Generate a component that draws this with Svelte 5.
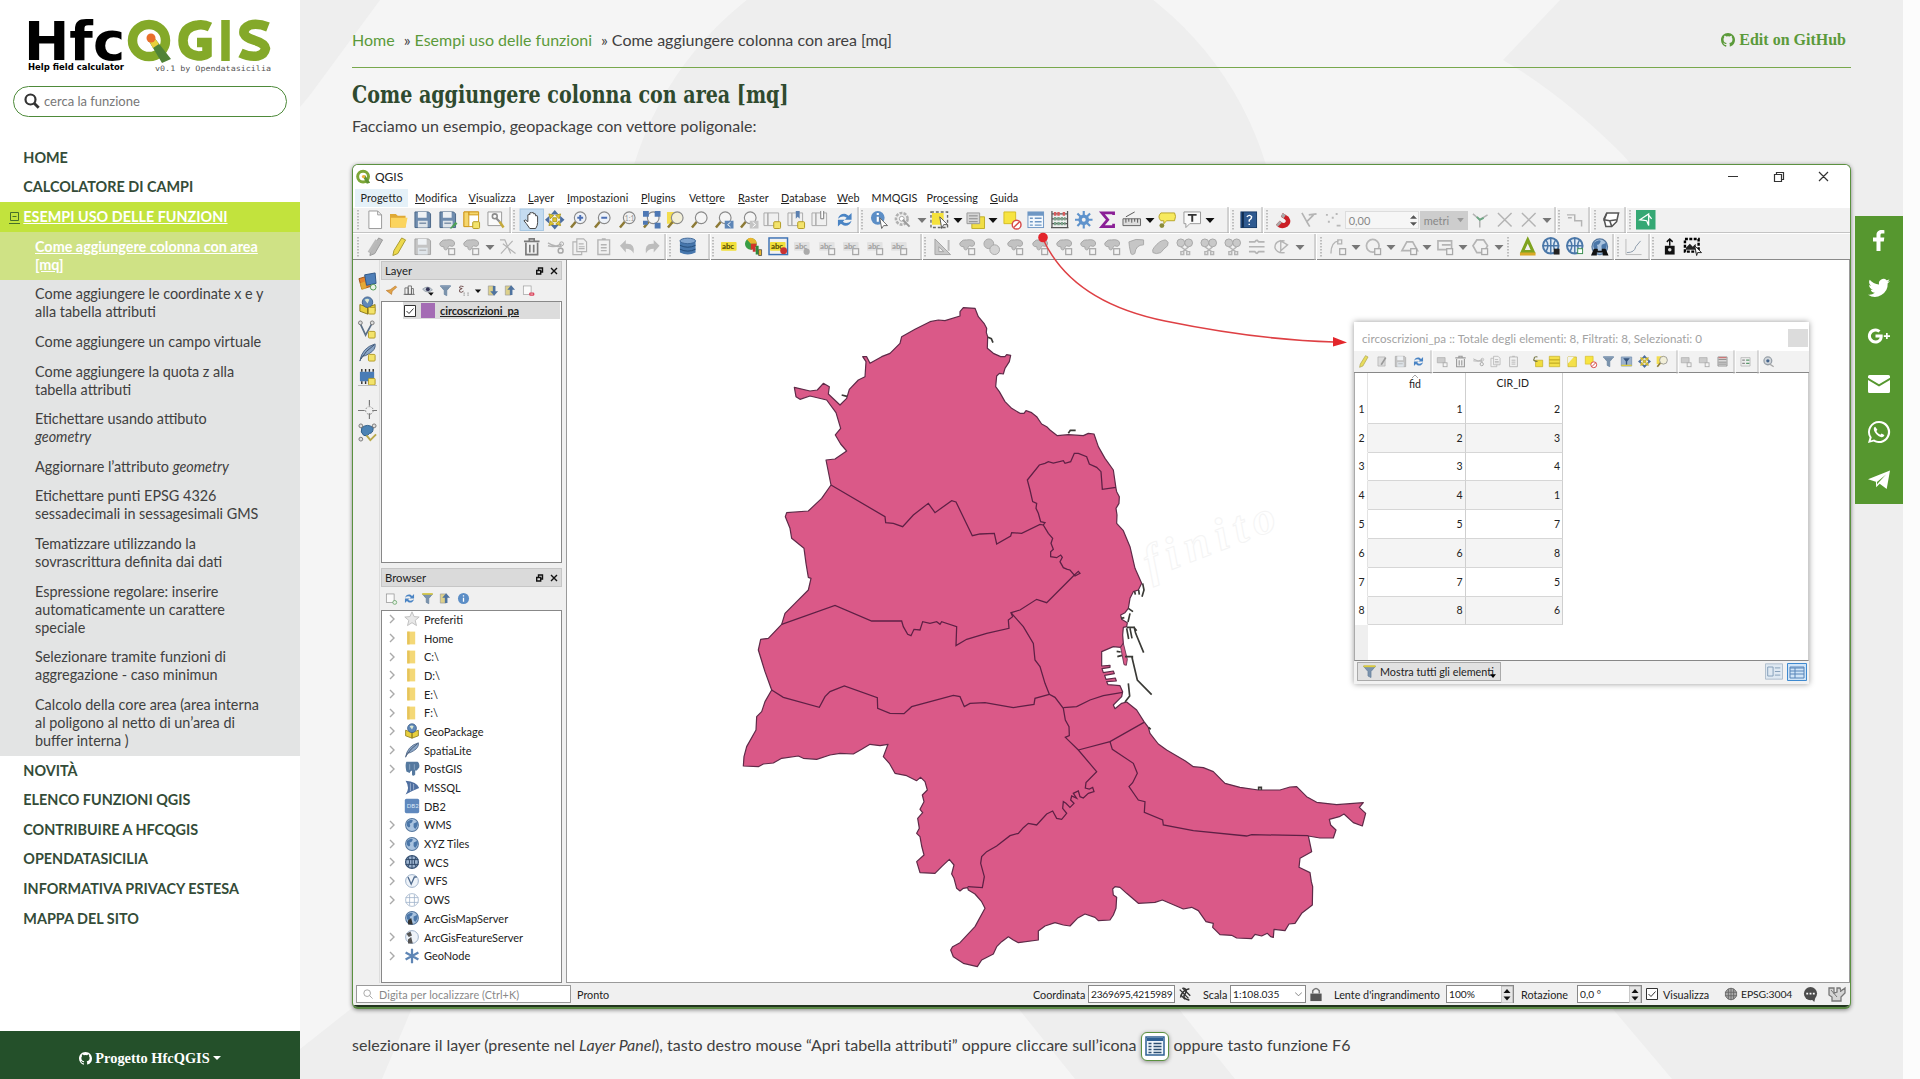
<script>
  const G = '#b4b4b4';
  const B = '#5f86b5';
  const grey = (d, s = 1.4) => `<path d="${d}" fill="none" stroke="${G}" stroke-width="${s}"/>`;
  const plus = '<rect x="11" y="12" width="7" height="7" rx="1" fill="#f3e36b" stroke="#b39b25"/>';
  const gplus = '<rect x="11" y="12" width="6" height="6" fill="#f4f4f4" stroke="#a8a8a8" stroke-width="1.3"/>';
  const blob = '<path d="M2 6q3-4 7-3 7-1 8 3 0 5-5 3-2 1-3 4-3 1-3-3-5 0-4-4z" fill="#c2c2c2" stroke="#a6a6a6"/>';
  const lens = (c, x = '') => `<path d="M7 12 2 18" stroke="#8d7a35" stroke-width="2.6"/><circle cx="11.5" cy="8" r="6" fill="${c}" stroke="#8a8a8a" stroke-width="1.2"/>${x}`;
  const globe = (x = '') => `<circle cx="10" cy="10" r="8" fill="#a9c3df" stroke="#56789f" stroke-width="1.3"/><path d="M4 6q5-4 7-2-1 4-4 4 2 4-1 5-4-2-2-7zM12 8l5-2q1 5-3 9-3-3-2-7z" fill="#4a76a8"/>${x}`;
  const abc = (c, b, x = '') => `<rect x="1" y="5" width="16" height="9" rx="1" fill="${c}"/><text x="2" y="12.5" font-size="8" font-weight="700" fill="${b}">abc</text>${x}`;
  const table = '<rect x="2" y="2" width="16" height="16" fill="#f3f8fd" stroke="#6e97c4"/><path d="M2 4h16" stroke="#6e97c4" stroke-width="4"/><path d="M4 8.500h3M4 12h3M4 15.500h3M9 8.500h7M9 12h7M9 15.500h7" stroke="#6e97c4" stroke-width="1.500"/>';
  const floppy = (c, s) => `<path d="M2 2h14l2 2v14H2z" fill="${c}" stroke="${s}"/><path d="M5 2h9v6H5z" fill="#eef1f4"/><path d="M5 11h10v7H5z" fill="#dfe5ea"/><path d="M6.500 13.500h7" stroke="${s}"/>`;
  const cyl = '<path d="M2 4v12q8 4 16 0V4z" fill="#4777ad"/><ellipse cx="10" cy="4" rx="8" ry="2.800" fill="#7fa4cf" stroke="#3c6697"/><path d="M2 8.500q8 4 16 0M2 12.500q8 4 16 0" fill="none" stroke="#234b78"/>';
  const sparkle = (c) => `<path d="M10 1v18M1 10h18M3.500 3.500l13 13M16.500 3.500l-13 13" stroke="${c}" stroke-width="2.200"/>`;
  const funnel = (t = '#8aa0b8') => `<path d="M2 3h16l-6 7v8l-4-2v-6z" fill="#7b93ad" stroke="#65809c"/><path d="M2 3h16" stroke="${t}" stroke-width="2.500"/>`;
  const refresh = (c = '#4a84c4') => `<path d="M3 9q2-6 8-5l3 2 3-3v7h-7l2-2q-4-3-9 1zM17 11q-2 6-8 5l-3-2-3 3v-7h7l-2 2q4 3 9-1z" fill="${c}"/>`;
  const feather = '<path d="M2 19Q4 5 18 1q1 6-6 10-4 3-8 3z" fill="#8ba6c6" stroke="#4b6384"/><path d="M3 17Q8 8 17 2" stroke="#3b4f6b" fill="none"/>';
  const box = '<path d="M2 9l8 3v7l-8-3zM18 9l-8 3v7l8-3z" fill="#e8cf3d" stroke="#8c7a1c"/><circle cx="10" cy="6.500" r="5.500" fill="#5f88b8" stroke="#3f608a"/><path d="M7 4q3-2 5 0l-2 4z" fill="#dce8d0"/>';
  const trash = (c) => `<path d="M2 4.500h16M7.500 4V2h5v2M4 6v12h12V6M8 8v8M12 8v8" fill="none" stroke="${c}" stroke-width="1.700"/>`;
  const pages = grey('M7 2h7l3 3v10H7zM7 5H3v13h9v-3M9 7h5M9 10h6M9 12h6', 1.2);
  const scis = grey('M2 6q7 4 14 4M2 9q8 2 14-2', 1.5) + '<circle cx="16" cy="7" r="2" fill="none" stroke="#a8a8a8"/><circle cx="15" cy="14" r="2.500" fill="none" stroke="#a8a8a8" stroke-width="1.500"/>';
  const pencil = (a, b) => `<path d="M13 1l4 2-8 14-5 2 1-5z" fill="${a}" stroke="${b}"/>`;
  const pans = '<path d="M10 0l4 4.500H6zM10 20l4-4.500H6zM0 10l4.500-4v8zM20 10l-4.500-4v8z" fill="#4d6fa0"/><path d="M4 4l5 1.500L5.500 9zM16 4l-5 1.500L14.500 9zM4 16l5-1.500L5.500 11zM16 16l-5-1.500 3.500-3.500zM8 8h4v4H8z" fill="#e2c92d" stroke="#a38e13" stroke-width=".8"/>';

  const icons = {
    handle: '<path d="M10 0v20" stroke="#bdbdbd" stroke-width="2" stroke-dasharray="1.500 1.500"/>',
    sep: '<path d="M10-3v26" stroke="#b0b0b0"/><path d="M11.500-3v26" stroke="#fff"/>',
    tri: '<path d="M5.500 8h9L10 13z" fill="#111"/>',
    trig: '<path d="M5.500 8h9L10 13z" fill="#777"/>',
    new: '<path d="M4 1h9l4 4v14H4z" fill="#fff" stroke="#9a9a9a"/><path d="M13 1v4h4" fill="none" stroke="#9a9a9a"/>',
    open: '<path d="M1 4h6l2 2h8v12H1z" fill="#dfa935"/><path d="M2 8h17l-2 10H2z" fill="#fbd45e"/>',
    save: floppy('#6f8cae', '#4b6788'),
    saveas: floppy('#6f8cae', '#4b6788') + '<path d="M12 19l6-7 2 2-6 5z" fill="#4da056"/>',
    layout: '<path d="M2 2h15v15H2z" fill="#fff" stroke="#d19b20"/><path d="M2 2h5v15H2zM7 2h10v3H7z" fill="#f5d66c" stroke="#d19b20"/>' + plus,
    manager: '<path d="M2 2h14v14H2z" fill="#fafafa" stroke="#999"/><circle cx="9" cy="6.500" r="2.500" fill="none" stroke="#8c8c8c" stroke-width="1.600"/><path d="M10 8l4 4" stroke="#8c8c8c" stroke-width="2.200" fill="none"/><path d="M14 12l4 6" stroke="#c5a93a" stroke-width="2.500"/>',
    hand: '<rect x="-2" y="-1" width="24" height="22" fill="#c5dcf0" stroke="#a6c6e2"/><path d="M6 12V5q2-1 2 0V3q2-1 2 0 2-1 2 0v1q2-1 2 1v1q2-1 2 1v6q0 3-2 6H8q-4-6-6-8 1-2 4 1z" fill="#fff" stroke="#444"/>',
    pan: pans,
    zin: lens('#eef2f8', '<path d="M11.500 5v6M8.500 8h6" stroke="#4c6fb4" stroke-width="2"/>'),
    zout: lens('#eef2f8', '<path d="M8.500 8h6" stroke="#4c6fb4" stroke-width="2"/>'),
    zone: lens('#f2f2f2', '<text x="7" y="11" font-size="7" fill="#999">1:1</text>'),
    zfull: lens('#f5f5f5') + '<path d="M1 1h6v6H1zM13 1h6v6h-6zM13 13h6v6h-6zM1 11h5v4H1z" fill="#4e78b4"/>',
    zsel: '<path d="M1 2h12v12H1z" fill="#f3dd4e"/>' + lens('#f2efd8'),
    zlay: lens('#f5f5f5'),
    zlast: lens('#f5f5f5') + '<rect x="11" y="11" width="9" height="8" fill="#5d86b8"/><path d="M17 12.500l-3 2.500 3 2.500" stroke="#fff" fill="none"/>',
    znext: lens('#f5f5f5') + '<rect x="11" y="11" width="9" height="8" fill="#c4c4c4"/><path d="M14 12.500l3 2.500-3 2.500" stroke="#fff" fill="none"/>',
    view: '<path d="M1 3h4v13H1zM5 3h11v13H5z" fill="#f0f0f0" stroke="#aaa"/>' + plus,
    bm: '<path d="M1 3h4v13H1zM5 3h11v13H5z" fill="#f0f0f0" stroke="#aaa"/><path d="M9 1h4v8l-2-2-2 2z" fill="#5b80b0"/>' + plus,
    bms: '<path d="M1 3h4v13H1zM5 3h11v13H5z" fill="#f0f0f0" stroke="#aaa"/><path d="M10 1v8h3V1" fill="#fff" stroke="#777"/>',
    refresh: refresh(),
    info: '<circle cx="9" cy="8" r="7" fill="#5c8ec6"/><path d="M9 3v2M9 7v5" stroke="#fff" stroke-width="2.200"/><path d="M11 8l8 8h-4l-2 3z" fill="#fff" stroke="#666"/>',
    gear: '<circle cx="9" cy="9" r="6" fill="#eee" stroke="#b0b0b0" stroke-width="2.600" stroke-dasharray="3 1.200"/><circle cx="9" cy="9" r="2.500" fill="#fff" stroke="#a5a5a5"/><path d="M10 10l7 7" stroke="#999" stroke-width="2"/>',
    select: '<rect x="1" y="2" width="17" height="16" fill="none" stroke="#666" stroke-dasharray="3 2" stroke-width="1.400"/><path d="M2 3h12v12H2z" fill="#f5e13c"/><path d="M10 7l8 8h-4l-2 4z" fill="#fff" stroke="#555"/>',
    multi: '<path d="M6 7h13v12H6z" fill="#f1de45" stroke="#bfae2a"/><path d="M1 3h13v11H1z" fill="#d5d5d5" stroke="#999"/><path d="M3 6h9M3 9h9M3 12h9" stroke="#888"/>',
    desel: '<path d="M2 2h12v12H2z" fill="#f7e441" stroke="#d5bd24"/><circle cx="15" cy="15" r="4.500" fill="#fff" stroke="#d74a4a" stroke-width="1.500"/><path d="M12 18l6-6" stroke="#d74a4a" stroke-width="1.500"/>',
    table,
    abacus: '<path d="M2 1v17M18 1v17M1 18h18M2 4h16M2 9h16M2 14h16" stroke="#555" stroke-width="1.300"/><path d="M4 4h6M13 4h3" stroke="#d65c5c" stroke-width="4" stroke-dasharray="2.500 1"/><path d="M4 9h12M4 14h12" stroke="#7da48b" stroke-width="3.500" stroke-dasharray="2.500 1"/>',
    cog: sparkle('#5f93cc') + '<circle cx="10" cy="10" r="5.500" fill="#5f93cc"/><circle cx="10" cy="10" r="2" fill="#f0f0f0"/>',
    sigma: '<path d="M16 5V3H4l6 7-6 7h12v-3" fill="none" stroke="#8a1f96" stroke-width="2.800"/>',
    ruler: '<path d="M1 9h18v7H1z" fill="#ddd" stroke="#666"/><path d="M4 9v4M7 9v3M10 9v4M13 9v3M16 9v4M4 7l9-5" stroke="#555"/>',
    tip: '<path d="M4 3h14q2 3 0 8h-8l-3 3v-3H4q-4-4 0-8z" fill="#f7ea5e" stroke="#b8a52a"/><circle cx="5" cy="16" r="2.500" fill="#8b8b3a"/>',
    text: '<path d="M2 2h17v12H8l-4 4v-4H2z" fill="#fafafa" stroke="#999"/><path d="M6 5h9M10.500 5v7" stroke="#333" stroke-width="2"/>',
    help: '<rect x="2" y="2" width="16" height="16" fill="#2f5a90" stroke="#173c69"/><path d="M4 2v16" stroke="#0f2c50" stroke-width="2"/><path d="M8 7q3-3 5 0 0 2-2.500 3.500V12M10.500 14v1.500" stroke="#fff" stroke-width="1.500" fill="none"/>',
    magnet: '<path d="M9 3l6 4q4 6-1 10-7 4-12-2l4-4q4 4 6 1 1-2-5-5z" fill="#cb1f26"/><path d="M9 3l3 2-2 3.500-3-2zM2 15l4-4 2 2-4 4z" fill="#aaa"/>',
    vee: grey('M3 3l5 9 7-7M10 5l8-1M8 12l3 5', 1.7),
    dots: '<path d="M3 5h2M9 8h2M5 12h2M13 4h2M14 16h4" stroke="#b8b8b8" stroke-width="2"/>',
    fork: grey('M10 18v-8L3 4M10 10l8-5', 1.6) + '<path d="M7 7l3 3 4-2" stroke="#6da884" stroke-width="2" fill="none"/>',
    ex: grey('M3 3l14 14M17 3 3 17', 1.5),
    step: grey('M2 5h8v6h7v6M3 8h4', 1.5),
    cube: '<path d="M6 3h12l-2 9-5 5H5L3 9z" fill="#fff" stroke="#555" stroke-width="1.600"/><path d="M3 10l6 1 7-1M9 11l2 6M6 3l-3 8" stroke="#555" fill="none" stroke-width="1.600"/>',
    green: '<rect x="0" y="0" width="20" height="20" fill="#35a874"/><path d="M4 10l9-6v12l-2-5zM12 4l4 5" fill="none" stroke="#fff" stroke-width="1.300"/>',
    pens: pencil('#b8b8b8', '#999') + '<path d="M3 16L11 3" stroke="#bbb" stroke-width="3"/>',
    pen: pencil('#edd94c', '#a99a2e'),
    gfloppy: floppy('#c4c4c4', '#a5a5a5'),
    blobp: blob + gplus,
    vertex: grey('M2 3h5l6 14M3 17L15 4M5 7l13 10', 1.2),
    trash: trash('#7a7a7a'), trashg: trash('#999'),
    scis, pages,
    clip: grey('M4 3h12v15H4zM8 2h4M7 8h6M7 11h6M7 14h6'),
    undo: '<path d="M8 3v4q10-1 8 10-2-5-8-5v4L2 9z" fill="#bdbdbd"/>',
    redo: '<path d="M12 3v4Q2 6 4 17q2-5 8-5v4l6-7z" fill="#bdbdbd"/>',
    db: cyl,
    abc1: abc('#f1df3b', '#4d4300'),
    pie: '<circle cx="7" cy="7" r="6" fill="#389d45"/><path d="M7 7l-4-4.500A6 6 0 0 1 13 7z" fill="#e8b52d"/><path d="M7 7h6a6 6 0 0 1-6 6z" fill="#d33529"/><path d="M9 11h3v4H9z" fill="#c33"/><path d="M12 9h3v9h-3z" fill="#2f8a3c"/><path d="M15 13h3v6h-3z" fill="#e8b52d" stroke="#333" stroke-width=".7"/>',
    abc2: '<rect x="0" y="1" width="19" height="17" fill="none" stroke="#3d72b4" stroke-width="1.500"/>' + abc('#f1df3b', '#4d4300', '<circle cx="15" cy="14" r="3.500" fill="#c93232"/>'),
    abcg: abc('#e2e2e2', '#9b9b9b', '<circle cx="14" cy="15" r="3.200" fill="#aaa"/>'),
    abch: abc('#e2e2e2', '#9b9b9b', gplus),
    setsq: '<path d="M2 2v16h16zM6 10v5h5z" fill="#c8c8c8" stroke="#a5a5a5" fill-rule="evenodd"/><path d="M16 3v11" stroke="#bbb" stroke-width="2"/>',
    two: '<circle cx="7" cy="7" r="5" fill="#c4c4c4" stroke="#a9a9a9"/><circle cx="13" cy="13" r="5" fill="#d4d4d4" stroke="#a9a9a9"/>',
    leaf: '<path d="M2 5q7-4 15-2v5q-8 0-9 9-3 2-4 0Q2 9 2 5z" fill="#c6c6c6" stroke="#aaa"/>',
    bean: '<path d="M3 11Q9 3 15 3q4 2 2 6-4 3-7 7-5 2-8 0-1-3 1-5z" fill="#c6c6c6" stroke="#aaa"/>',
    cut: '<circle cx="6" cy="6" r="4" fill="#c9c9c9" stroke="#a8a8a8"/><circle cx="14" cy="6" r="4" fill="#c9c9c9" stroke="#a8a8a8"/>' + grey('M6 10l7 5M14 10l-6 5M6 15h3v3H6zM12 15h3v3h-3z'),
    align: grey('M2 5h6l2-2M18 5h-6l-2-2M2 10h16M2 15h6l2 2M18 15h-6l-2 2', 1.6),
    rot: grey('M14 4Q4 3 4 11q2 6 10 5M10 4v10l7-6z'),
    arc: grey('M2 17Q2 5 10 4M9 3h4v4H9z') + gplus,
    circ: '<circle cx="9" cy="9" r="6.500" fill="none" stroke="#b8b8b8" stroke-width="1.800"/>' + gplus,
    ell: grey('M2 14L7 5h6l5 9z', 1.7) + gplus,
    rect: grey('M2 4h14v9H2zM6 8h9', 1.7) + gplus,
    hex: grey('M6 3h7l4 6-4 7H6L2 9z', 1.7) + gplus,
    warn: '<path d="M10 3l5.500 12h-11z" fill="none" stroke="#7fa31f" stroke-width="3.200"/><path d="M2 17.500h16" stroke="#d9a928" stroke-width="3"/>',
    gl1: '<circle cx="9" cy="9" r="8" fill="#dfeaf5" stroke="#4a77a8" stroke-width="2"/><path d="M1 9h16M9 1v16M4 3q4 6 0 12M14 3q-4 6 0 12" stroke="#4a77a8" stroke-width="1.500" fill="none"/><rect x="12" y="12" width="6" height="6" fill="#222"/>',
    gl2: '<circle cx="9" cy="9" r="8" fill="#dfeaf5" stroke="#4a77a8" stroke-width="2"/><path d="M1 9h16M9 1v16M4 3q4 6 0 12M14 3q-4 6 0 12" stroke="#4a77a8" stroke-width="1.500" fill="none"/><rect x="12" y="12" width="5" height="5" fill="#fff" stroke="#3d9152"/>',
    gl3: globe('<path d="M4 12h4v2h4v-2h4l3 7h-6v-3H7v3H1z" fill="#111"/>'),
    graph: '<path d="M2 2v16h16" stroke="#bbb" fill="none"/><path d="M3 16q8 0 9-6l5-6" stroke="#8a99aa" fill="none"/>',
    lock1: '<rect x="5" y="9" width="10" height="9" fill="#111"/><path d="M10 9V3M7 5l3-3 3 3" stroke="#111" stroke-width="1.500" fill="none"/><circle cx="10" cy="13" r="1.800" fill="#ddd"/>',
    dash: '<rect x="2" y="2" width="14" height="13" fill="none" stroke="#000" stroke-width="2.500" stroke-dasharray="3 1.500"/><path d="M3 11l4-4 3 3 3-3v6H3z" fill="#222"/><path d="M12 9l7 7h-4l-1 3z" fill="#fff" stroke="#222"/>',
    stack: '<path d="M1 7l10-3 3 11-10 3z" fill="#e4832d" stroke="#9e5213"/><path d="M7 3l11-2 1 11-10 2z" fill="#4f7fb8" stroke="#2e5687"/><path d="M2 12l5-2 2 7-5 2z" fill="#e5b93c" opacity=".7"/><circle cx="16" cy="16" r="3" fill="#e8f2e5" stroke="#4c9450"/>',
    gpkg: box + plus,
    vnew: '<path d="M2 3l6 13L15 3" fill="none" stroke="#5b6f86" stroke-width="1.800"/><circle cx="2.500" cy="3" r="2" fill="#ddd" stroke="#777"/><circle cx="15" cy="3" r="2" fill="#ddd" stroke="#777"/>' + plus,
    feat: feather + plus, feather,
    chip: '<rect x="2" y="5" width="15" height="10" fill="#4a7cb6"/><path d="M4 2v3M8 2v3M12 2v3M16 2v3M4 15v3M8 15v3" stroke="#333" stroke-width="1.500"/>' + plus,
    cross: '<path d="M12 0v6M12 14v6M0 11h7M15 11h5" stroke="#777" stroke-width="1.200"/><circle cx="12" cy="11" r="4" fill="none" stroke="#888" stroke-dasharray="2 1.500"/>',
    topo: '<path d="M4 5q6-5 12 0 0 6-4 6-2 4-6 2-4-3-2-8z" fill="#4c83b4" stroke="#2d5c86"/><circle cx="3" cy="3" r="2" fill="#ddd" stroke="#777"/><circle cx="17" cy="3" r="2" fill="#ddd" stroke="#777"/><circle cx="3" cy="17" r="2" fill="#ddd" stroke="#777"/><path d="M9 13l4 5 6-6" stroke="#b9a94b" stroke-width="2" fill="none"/>',
    brush: '<path d="M2 10l6-1 8-6 2 2-7 6-1 5z" fill="#e2a548" stroke="#b9762b"/>',
    group: '<path d="M3 16V6h5v10zM8 16V3h5v13zM13 16V7h3v9M1 16h17" fill="none" stroke="#666" stroke-width="1.300"/>',
    eye: '<path d="M1 8q8-7 15 1-8 7-15-1z" fill="#c5cdd4" stroke="#7b8894"/><circle cx="9" cy="8" r="3" fill="#335"/><path d="M9 13h9l-4 5z" fill="#111"/>',
    funnel: funnel(), funnely: funnel('#dccb3e'),
    eps: '<path d="M10 4Q3 2 4 6l4 1q-6 1-4 5 3 2 6-1" fill="none" stroke="#6c4a4a" stroke-width="1.500"/><path d="M11 13v5M17 13v5" stroke="#999" stroke-width="2" stroke-dasharray="2 1"/>',
    down: '<path d="M2 3h9v14H2z" fill="#ddd08a" stroke="#999"/><path d="M13 3v8h4l-6 7-6-7h4V3z" fill="#4f739f"/>',
    up: '<path d="M2 3h9v14H2z" fill="#ddd08a" stroke="#999"/><path d="M13 17V9h4l-6-7-6 7h4v8z" fill="#4f739f"/>',
    rem: '<rect x="2" y="3" width="12" height="13" fill="#fafafa" stroke="#999"/><rect x="11" y="13" width="8" height="5" rx="2" fill="#d9425a"/><path d="M13 15.500h4" stroke="#fff"/>',
    add: '<rect x="2" y="3" width="12" height="13" fill="#fafafa" stroke="#888"/><circle cx="15" cy="16" r="3" fill="#e8f2e5" stroke="#4c9450"/>',
    i: '<circle cx="10" cy="10" r="8.500" fill="#5c8ec6"/><path d="M10 5v2M10 9v6" stroke="#fff" stroke-width="2"/>',
    star: '<path d="M10 1l2.600 6 6.400.5-5 4.200 1.600 6.500L10 14.600 4.400 18.200 6 11.700 1 7.500 7.400 7z" fill="#e8e8e8" stroke="#b5b5b5"/>',
    folder: '<path d="M4 2h10v16H4z" fill="#f4d877"/><path d="M4 2h3v16H4z" fill="#e6c45b"/>',
    box,
    pg: '<path d="M3 1h14q3 2 2 7l-3 4h-2v5q-3 3-4 0v-5l-2 1-1 2-4-2Q1 5 3 1z" fill="#55799f"/><path d="M7 4v7M13 4v7" stroke="#7f9dbd" stroke-width="1.500"/>',
    ms: '<path d="M2 1q14 1 17 9-10 4-17 8 6-8 0-17z" fill="#4f6fa0"/><path d="M8 4v10M12 5v7" stroke="#a8bcd8"/>',
    db2: '<rect x="1" y="1" width="18" height="18" rx="2" fill="#5f88bd"/><text x="3.500" y="13" font-size="7.500" fill="#dce8f6">DB2</text>',
    globe: globe(),
    wcs: '<circle cx="10" cy="10" r="8" fill="#9db4d0" stroke="#3b5577" stroke-width="1.600"/><path d="M2 7h16M2 13h16M10 2v16M5 4q4 6 0 12M15 4q-4 6 0 12" stroke="#2f4869" fill="none" stroke-width="1.200"/>',
    wfs: '<circle cx="10" cy="10" r="8" fill="#eef3f9" stroke="#8aa2bf"/><path d="M5 5l4 9 4-9h3" fill="none" stroke="#506b8d" stroke-width="1.700"/>',
    ows: '<circle cx="10" cy="10" r="8" fill="#fff" stroke="#9fb3ca"/><path d="M2 7h16M2 13h16M7 3v14M13 3v14" stroke="#9fb3ca" fill="none"/>',
    arcm: globe('<path d="M5 18v-5l4-3 2 8z" fill="#333"/>'),
    arcf: '<circle cx="10" cy="10" r="8" fill="#eef3f9" stroke="#8aa2bf"/><path d="M3 6l5-3 2 5-4 2zM5 18v-5l4-3 2 8z" fill="#555"/>',
    gnode: '<path d="M10 1v18M2 5.500l16 9M18 5.500l-16 9" stroke="#5f86b5" stroke-width="2.800"/>',
    tpen: pencil('#e8dc5c', '#aaa14a'),
    edit: '<path d="M3 3h11v14H3z" fill="#ddd" stroke="#aaa"/><path d="M15 4L8 15" stroke="#999" stroke-width="2.500"/>',
    tnew: '<path d="M2 4h12v8H2z" fill="#ccc" stroke="#aaa"/>' + gplus,
    esel: '<path d="M7 8h11v10H7z" fill="#f1dd3e" stroke="#c1a91d"/><path d="M10 3Q4 2 5 6q-3 3 5 4" stroke="#774" stroke-width="1.700" fill="none"/>',
    rows: '<path d="M2 2h16v16H2z" fill="#f4e04a" stroke="#c5ae22"/><path d="M2 7.500h16M2 12.500h16" stroke="#b79f1a" stroke-width="1.500"/>',
    inv: '<path d="M3 3h13v15H3z" fill="#f4e04a" stroke="#c5ae22"/><path d="M3 3h9L3 13z" fill="#f3f3ee"/>',
    tfun: '<path d="M2 3h16v14H2z" fill="#9db3cd" stroke="#6c88aa"/><path d="M5 5h10l-4 5v5H9v-5z" fill="#35547d"/><path d="M2 16h16" stroke="#dccb3e" stroke-width="2"/>',
    calc: '<path d="M3 3h14v14H3z" fill="#ddd" stroke="#777"/><path d="M4 7h12M4 11h12M4 14h12" stroke="#666"/><path d="M4 4h12" stroke="#c77" stroke-width="2"/>',
    cond: '<path d="M3 4h14v13H3z" fill="#eee" stroke="#aaa"/><path d="M5 8h4M5 13h4" stroke="#888" stroke-width="2"/><path d="M11 8h5M11 13h5" stroke="#5a9a6b" stroke-width="2"/>',
    tgear: '<circle cx="9" cy="9" r="6" fill="#d2d7dc" stroke="#98a0a8" stroke-width="2"/><circle cx="9" cy="9" r="2.500" fill="#44648c"/><path d="M12 14l6 4" stroke="#aaa" stroke-width="2"/>',
  };

  const thin = (k) => ['sep', 'handle', 'tri', 'trig'].includes(k);

  // Turns [icon, centre x] pairs into icons separated by the margins that centre them.
  const place = (list, start, w = 18) => {
    let at = start;
    return list.map(([k, cx, size = w]) => {
      const gap = cx - size / 2 - at;
      at = cx + size / 2;
      return { k, gap, size };
    });
  };
  const parse = (s) => s.trim().split(/\s+/).map((t) => { const [k, x] = t.split('@'); return [k, +x, thin(k) ? 4 : 19.5]; });

  const bar1a = place(parse('handle@358 new@375 open@398.7 save@423 saveas@448 layout@471.500 manager@496 sep@510 handle@514 hand@531.500 pan@554.500 zin@579 zout@603 zone@627.500 zfull@652 zsel@675.500 zlay@699.500 zlast@723.500 znext@749 view@773 bm@797 bms@821 refresh@845 sep@858 handle@862 info@879 gear@903 trig@922 select@940 tri@958 multi@976 tri@993.500 desel@1012 table@1035.500 abacus@1059.500 cog@1083.500 sigma@1107.500 ruler@1132 tri@1150 tip@1167 text@1192 tri@1210 sep@1228 handle@1233 help@1249 sep@1262 handle@1267 magnet@1284 vee@1309 dots@1333'), 353);
  const bar1b = place(parse('fork@1480 ex@1505 ex@1529 trig@1547 sep@1555 handle@1559 step@1575 sep@1589 handle@1595 cube@1611 sep@1625 handle@1630 green@1646'), 1468);
  const bar2 = place(parse('handle@358 pens@376 pen@398.500 gfloppy@423 blobp@448 blobp@472 trig@490 vertex@508 trash@532 scis@556 pages@579.500 clip@604 undo@628 redo@652 sep@665 handle@670 db@688 sep@709 handle@713 abc1@729.500 pie@754 abc2@778.500 abcg@803 abch@828 abch@852 abch@876 abch@900 sep@921 handle@925 setsq@943 blobp@968 two@992 blobp@1016 blobp@1041 blobp@1064.500 blobp@1089 blobp@1112.500 leaf@1136.500 bean@1161 cut@1184.500 cut@1209 cut@1233 align@1257 rot@1281 trig@1299.500 sep@1315 handle@1321 arc@1339 trig@1356 circ@1374 trig@1391 ell@1410 trig@1427 rect@1446 trig@1463 hex@1481 trig@1499 handle@1508 warn@1527.500 gl1@1552 gl2@1576 gl3@1600 sep@1613 handle@1618 graph@1634 sep@1649 handle@1653 lock1@1670 dash@1693'), 353);
  const dock = place([['stack', 281], ['gpkg', 305], ['vnew', 329], ['feat', 352], ['chip', 376], ['cross', 409], ['topo', 432]], 260, 19);
  const layerTools = place([['brush', 391], ['group', 409.5], ['eye', 428], ['funnel', 445], ['eps', 463], ['tri', 478], ['down', 493], ['up', 510], ['rem', 528.5]], 381, 13);
  const browserTools = place([['add', 391], ['refresh', 409.5], ['funnely', 427], ['up', 445], ['i', 463]], 381, 13);
  const tableTools = place([['tpen', 1363.5], ['edit', 1382], ['gfloppy', 1400], ['refresh', 1418.5], ['sep', 1431, 4], ['tnew', 1442], ['trashg', 1460], ['scis', 1478], ['pages', 1495.5], ['clip', 1513], ['esel', 1537], ['rows', 1554.5], ['inv', 1572.5], ['desel', 1590.5], ['funnel', 1608.5], ['tfun', 1626.5], ['pan', 1644], ['zsel', 1662], ['sep', 1677, 4], ['tnew', 1686], ['tnew', 1704], ['calc', 1722], ['sep', 1734, 4], ['cond', 1745], ['sep', 1758, 4], ['tgear', 1768]], 1354, 13);

  const menus = [['Progetto', 360.5], ['Modifica', 415], ['Visualizza', 468.5], ['Layer', 528], ['Impostazioni', 567], ['Plugins', 641], ['Vettore', 689], ['Raster', 738], ['Database', 781], ['Web', 837], ['MMQGIS', 871.5], ['Processing', 926.5], ['Guida', 990]];
  const under = { Progetto: -1, Vettore: 4, MMQGIS: -1, Processing: 3 };
  const menuItems = menus.map(([t, x], n) => ({ t, w: (menus[n + 1]?.[1] ?? x + 50) - x, u: under[t] ?? 0 }));

  const tree = [['Preferiti', 'star', 1], ['Home', 'folder', 1], ['C:\\', 'folder', 1], ['D:\\', 'folder', 1], ['E:\\', 'folder', 1], ['F:\\', 'folder', 1], ['GeoPackage', 'box', 1], ['SpatiaLite', 'feather', 1], ['PostGIS', 'pg', 1], ['MSSQL', 'ms', 0], ['DB2', 'db2', 0], ['WMS', 'globe', 1], ['XYZ Tiles', 'globe', 1], ['WCS', 'wcs', 1], ['WFS', 'wfs', 1], ['OWS', 'ows', 1], ['ArcGisMapServer', 'arcm', 0], ['ArcGisFeatureServer', 'arcf', 1], ['GeoNode', 'gnode', 1]];
  const rows = [2, 3, 4, 1, 7, 8, 5, 6];

  const subNav = ['Come aggiungere le coordinate x e y alla tabella attributi', 'Come aggiungere un campo virtuale', 'Come aggiungere la quota z alla tabella attributi', 'Etichettare usando attibuto <em>geometry</em>', 'Aggiornare l’attributo <em>geometry</em>', 'Etichettare punti EPSG 4326 sessadecimali in sessagesimali GMS', 'Tematizzare utilizzando la sovrascrittura definita dai dati', 'Espressione regolare: inserire automaticamente un carattere speciale', 'Selezionare tramite funzioni di aggregazione - caso minimun', 'Calcolo della core area (area interna al poligono al netto di un’area di buffer interna )'];
  const after = ['NOVITÀ', 'ELENCO FUNZIONI QGIS', 'CONTRIBUIRE A HFCQGIS', 'OPENDATASICILIA', 'INFORMATIVA PRIVACY ESTESA', 'MAPPA DEL SITO'];

  const socials = [
    'M13.500 23v-9.500h3.300l.5-3.900h-3.800V7.200c0-1.100.3-1.700 1.900-1.700h2V2.200C17.100 2.100 16 2 14.700 2 11.800 2 9.500 3.700 9.500 6.900v2.700H6v3.900h3.500V23z',
    'M23 5c-.8.4-1.700.6-2.600.7.9-.5 1.600-1.400 2-2.500-.9.5-1.800.9-2.800 1.100A4.500 4.500 0 0 0 12 8.400C8.200 8.200 4.900 6.400 2.700 3.700c-1.200 2-.6 4.700 1.400 6-.7 0-1.400-.2-2-.6 0 2.100 1.400 4 3.600 4.500-.6.2-1.300.2-2 .1.500 1.800 2.200 3.100 4.200 3.100A9 9 0 0 1 1 18.700 12.800 12.800 0 0 0 20.700 7.300C21.600 6.700 22.400 5.900 23 5z',
    'M8.500 10.500v3h4.200c-.3 1.300-1.500 3-4.200 3a4.500 4.500 0 1 1 2.900-7.900l2.100-2.100A7.500 7.500 0 1 0 8.500 19.500c4.300 0 7.200-3 7.200-7.300 0-.6 0-1.100-.1-1.700zM19 9v2.200h-2.200v1.700H19V15h1.700v-2.100H23v-1.700h-2.300V9z',
    'M2.500 3h19A1.500 1.500 0 0 1 23 4.500v1.300L12 12.300 1 5.800V4.500A1.500 1.500 0 0 1 2.500 3zM1 8l11 6.500L23 8v11.500a1.500 1.500 0 0 1-1.500 1.500h-19A1.500 1.500 0 0 1 1 19.500z',
    'M12 1a11 11 0 0 0-9.400 16.600L1 23l5.600-1.500A11 11 0 1 0 12 1zm0 2a9 9 0 1 1-4.900 16.600l-3.300.8.900-3.100A9 9 0 0 1 12 3zM8.200 6.800c-.8.3-1.500 1.200-1.400 2.500.3 3.200 4.200 7.400 7.700 7.900 1.500.1 2.700-.8 2.800-2.200l-2.700-1.500-1.200 1.300c-2-.8-3.200-2-4-3.700l1-1.300z',
    'M23 2.500L19.700 21l-7-5.200-3.500 3.500-.3-5.500L1 11.200zM19 6.500l-9 7.500.2 2.500 1-1.600z',
  ];
  const github = 'M8 0C3.580 0 0 3.580 0 8c0 3.540 2.290 6.530 5.470 7.590.4.070.55-.17.55-.38v-1.500c-2.230.48-2.700-1-2.700-1-.36-.9-.9-1.200-.9-1.200-.7-.5.060-.5.060-.5.800.060 1.230.83 1.230.83.720 1.200 1.870.87 2.330.66.070-.52.280-.87.500-1.070-1.770-.2-3.640-.9-3.640-4 0-.87.310-1.590.82-2.150-.08-.2-.36-1.020.08-2.120 0 0 .67-.21 2.200.82a7.600 7.600 0 0 1 4 0c1.530-1.040 2.200-.82 2.200-.82.44 1.100.16 1.920.08 2.120.51.560.82 1.270.82 2.150 0 3.100-1.870 3.770-3.650 3.970.29.250.54.730.54 1.480v2.200c0 .21.150.46.550.38A8 8 0 0 0 16 8c0-4.420-3.580-8-8-8z';

  const outline = '690,65 700,53 735,55 745,80 762,100 770,115 769,128 773,140 772,175 790,190 812,200 825,200 830,194 842,196 838,215 825,235 820,252 808,250 800,258 797,290 808,305 825,335 845,355 870,370 882,370 888,362 905,368 920,380 935,402 950,410 960,420 982,437 1015,434 1060,437 1075,430 1092,432 1105,470 1125,505 1150,540 1158,595 1160,605 1168,620 1167,640 1158,655 1161,675 1160,700 1180,722 1200,770 1215,835 1235,880 1225,900 1210,905 1200,925 1195,955 1185,968 1172,975 1175,988 1192,998 1190,1010 1180,1012 1178,1035 1180,1060 1172,1072 1150,1070 1115,1085 1115,1128 1140,1126 1140,1132 1116,1136 1120,1148 1150,1143 1153,1151 1124,1156 1128,1168 1156,1164 1159,1173 1130,1175 1134,1184 1170,1187 1178,1205 1175,1220 1150,1245 1155,1256 1175,1240 1190,1236 1220,1260 1242,1295 1255,1312 1260,1330 1285,1362 1310,1380 1365,1412 1390,1430 1420,1433 1450,1445 1485,1480 1530,1492 1585,1500 1650,1500 1680,1491 1700,1490 1730,1520 1760,1537 1820,1544 1900,1538 1888,1552 1907,1570 1897,1608 1870,1598 1842,1572 1828,1580 1798,1588 1802,1605 1818,1620 1810,1644 1770,1644 1735,1638 1745,1685 1710,1705 1707,1732 1740,1748 1744,1775 1748,1790 1747,1845 1715,1870 1695,1900 1677,1902 1665,1922 1632,1918 1630,1942 1622,1940 1612,1930 1595,1938 1575,1933 1565,1946 1520,1944 1505,1936 1470,1934 1448,1912 1450,1900 1428,1895 1405,1862 1385,1852 1360,1857 1297,1830 1275,1837 1225,1840 1190,1810 1170,1792 1155,1790 1148,1797 1150,1815 1160,1822 1158,1855 1150,1875 1140,1890 1105,1892 1095,1882 1065,1872 1042,1885 1020,1908 1000,1905 975,1898 945,1908 925,1923 925,1950 865,1958 850,1950 835,1940 815,1955 800,1970 790,1992 755,2010 742,2030 700,2020 670,2000 662,1980 668,1970 690,1958 735,1910 765,1855 755,1835 735,1812 715,1800 713,1793 700,1795 690,1803 680,1795 672,1765 665,1752 672,1725 658,1708 635,1730 615,1750 570,1748 560,1715 582,1695 575,1668 570,1640 560,1630 568,1615 563,1585 578,1568 570,1558 582,1535 577,1515 592,1500 585,1475 572,1462 560,1472 530,1457 495,1450 478,1420 460,1400 474,1363 450,1367 420,1363 395,1378 370,1392 330,1390 300,1395 260,1408 220,1405 205,1398 155,1405 130,1419 100,1422 85,1430 40,1428 42,1400 50,1370 78,1320 80,1280 95,1265 105,1235 125,1200 105,1145 85,1080 92,1048 115,1045 155,1003 165,970 200,935 235,900 243,865 235,862 228,820 222,775 185,745 180,715 166,680 170,668 235,663 275,625 303,585 288,510 315,507 350,483 332,462 316,435 332,415 318,368 290,330 240,318 210,328 198,320 193,292 240,303 262,300 280,280 298,290 295,312 330,345 350,325 358,298 385,270 405,260 408,215 398,200 410,200 420,220 455,200 480,190 510,160 515,140 555,118 600,95 625,90 645,92 690,78';
  const lines = [
    '303,585 465,680 467,698 490,700 518,710 550,675 595,640 615,668 665,632 678,636 727,737 750,732 793,730 800,762 842,738 845,728 875,730 930,703 940,705',
    '1158,592 1117,598 1113,545 1100,532 1078,522 1070,500 1045,490 1033,490 1022,515 1005,520 1000,512 970,519 955,515 945,520 928,525 892,570 900,600 908,635 920,640 918,655 925,670 932,695 945,698 940,705 955,730 968,745 963,760 970,778 962,785 962,800 980,803 992,795 997,802 990,815 1000,833 1012,838 1020,840 1035,858 1050,850 1045,844 1030,858 950,938 920,928 870,960 843,968 848,980 835,990 837,1015 770,1030 710,1048 678,1067 680,1010 635,995 630,1003 620,995 600,1000 578,995 570,1020 552,1018 543,1037 533,1033 520,1010 515,993 425,993 315,946 155,1003',
    '843,968 880,1010 910,1060 915,1110 930,1130 945,1180 958,1213 975,1222 1000,1255 1006,1290 1017,1310 1018,1337 1006,1342 1045,1380 1100,1445 1068,1478 1066,1494 1078,1497 1088,1492 1092,1505 1075,1510 1060,1524 1050,1520 1045,1503 1030,1510 1040,1525 1025,1518 1022,1530 1032,1540 1020,1552 1008,1540 1000,1535 998,1555 1010,1570 995,1588 980,1585 968,1563 950,1572 920,1605 895,1600 880,1613 865,1630 840,1637 800,1668 770,1685 755,1700 752,1720 763,1760 757,1793 713,1790',
    '125,1200 160,1222 268,1252 285,1220 300,1205 343,1188 442,1223 443,1255 480,1270 522,1271 545,1250 670,1216 690,1220 703,1250 720,1240 765,1238 850,1253 912,1243 915,1225 958,1213',
    '1000,1253 1040,1250 1080,1230 1120,1217 1178,1207',
    '1045,1380 1140,1355 1242,1297',
    '1140,1355 1147,1378 1210,1420 1222,1450 1208,1478 1197,1490 1225,1530 1245,1535 1243,1567 1298,1590 1300,1605 1390,1622 1550,1638 1565,1634 1735,1637',
  ];
  const piers = '<path d="M1212 1010l5 20 24 58M1205 1098l17 72 43 44M1185 1100h22v8M1195 1180l4 38-14 18M1195 955l14 10M1200 970l-6 26M1190 1012h22l8 10M1190 1015l6 32M1200 1015l6 30M1238 880l4 20-6 20M1226 900l2 14M1214 904l2 10M1015 430l6-9h16M774 142l10 4 5 12M335 315l16 4M1256 1312l6 6M1586 1500v-8h8v8M1162 1100l14-4M1160 1084l12 2M1173 985l10-2"/>';
</script>

{#snippet icon(k, size)}
  <svg class="ic" viewBox="0 0 20 20" width={size} height={size}>{@html icons[k]}</svg>
{/snippet}

{#snippet strip(list, h)}
  {#each list as it}
    <span class="slot" style="margin-left:{it.gap}px;width:{it.size}px">{@render icon(it.k, thin(it.k) ? h : it.size)}</span>
  {/each}
{/snippet}

<div class="page">
  <aside>
    <svg class="logo" viewBox="0 0 250 60" width="250" height="60">
      <text x="-4" y="46" class="hfc" textLength="101" lengthAdjust="spacingAndGlyphs">Hfc</text>
      <g fill="none" stroke="#84a929" stroke-width="9.500">
        <ellipse cx="121" cy="26.500" rx="16.500" ry="16" />
        <path d="M182 13q-6-3-12-2-15 2-15 15.500t15 15.500q6 0 9-2V28.500H169" />
        <path d="M197.500 6v41" stroke-width="8.500" />
        <path d="M240 13q-10-4-18-2-7 3-6 8.500 2 4.500 11 7 10 3 10.500 8-1 6-8 7.500-9 1-17-3" />
      </g>
      <path d="M119 24l6-2 18 23-9 4z" fill="#4f8336" />
      <path d="M120 25l5-3 6 8-6 4z" fill="#e8d13c" />
      <circle cx="123" cy="24" r="4.500" fill="#e96f2b" />
      <text x="0" y="56" class="tag" textLength="96" lengthAdjust="spacingAndGlyphs">Help field calculator</text>
      <text x="127" y="56.500" class="by" textLength="116" lengthAdjust="spacingAndGlyphs">v0.1 by Opendatasicilia</text>
    </svg>
    <div class="search">
      <svg viewBox="0 0 16 16" width="16" height="16"><circle cx="6.500" cy="6.500" r="5" fill="none" stroke="#333" stroke-width="2.200" /><path d="M10.200 10.200l4.500 4.500" stroke="#333" stroke-width="2.800" /></svg>
      <span>cerca la funzione</span>
    </div>
    <nav>
      <a class="top">HOME</a>
      <a class="top">CALCOLATORE DI CAMPI</a>
      <a class="top open"><svg class="minus" viewBox="0 0 11 13" width="11" height="13"><path d="M1.500 1.500h8v8h-8zM3.500 5.500h4M0 12.500h11" fill="none" stroke="#47702a" /></svg><span>ESEMPI USO DELLE FUNZIONI</span></a>
      <a class="sub current"><span>Come aggiungere colonna con area [mq]</span></a>
      {#each subNav as s}<a class="sub">{@html s}</a>{/each}
      {#each after as s}<a class="top">{s}</a>{/each}
    </nav>
    <footer><svg viewBox="0 0 16 16" width="13" height="13"><path d={github} fill="#fff" /></svg>Progetto HfcQGIS<i></i></footer>
  </aside>

  <main>
    <svg class="bg" viewBox="300 0 1603 1079" width="1603" height="1079">
      <path d="M300 0h80l-70 95-10 12z" fill="#eeeeee" />
      <circle cx="950" cy="260" r="330" fill="#eeeeee" />
      <path d="M1560 0h343v1008h-60V520h-70q-40-240-150-365-60-60-120-95z" fill="#eeeeee" />
      <path d="M1018 1008h160l57 71h-160zM1612 1008h291v71h-231zM352 1008h60l-30 71h-82v-30z" fill="#eeeeee" />
    </svg>
    <div class="crumbs">
      <p><a>Home</a><b>»</b><a>Esempi uso delle funzioni</a><b>»</b>Come aggiungere colonna con area [mq]</p>
      <a class="edit"><svg viewBox="0 0 16 16" width="14" height="14"><path d={github} fill="#5b9a3a" /></svg>Edit on GitHub</a>
    </div>
    <h1><span>Come aggiungere colonna con area [mq]</span></h1>
    <p class="lead">Facciamo un esempio, geopackage con vettore poligonale:</p>

    <section class="shot">
      <header class="title">
        <svg viewBox="0 0 18 18" width="15" height="16"><circle cx="8.500" cy="8.500" r="6.500" fill="none" stroke="#7da637" stroke-width="3.600" /><path d="M8 8l3-1 6 9-4 1z" fill="#5f9331" /><circle cx="9" cy="8.500" r="2" fill="#edb13c" /></svg>
        <span>QGIS</span>
        <svg class="wins" viewBox="0 0 106 14" width="106" height="14"><path d="M3 6.500h10M49.500 4.500h7v7h-7zM51.500 4.500v-2h7v7h-2M94 2l9 9M103 2l-9 9" fill="none" stroke="#333" stroke-width="1.200" /></svg>
      </header>
      <div class="menu">
        {#each menuItems as m, n}
          <span class:hot={n === 0} style="width:{m.w}px">{#if m.u < 0}{m.t}{:else}{m.t.slice(0, m.u)}<u>{m.t[m.u]}</u>{m.t.slice(m.u + 1)}{/if}</span>
        {/each}
      </div>
      <div class="bar">
        {@render strip(bar1a, 20)}
        <span class="num">0,00<svg viewBox="0 0 8 14" width="7" height="13"><path d="M0 5l4-4 4 4zM0 9l4 4 4-4z" fill="#555" /></svg></span>
        <span class="unit">metri<svg viewBox="0 0 8 6" width="7" height="5"><path d="M0 0h8L4 5z" fill="#999" /></svg></span>
        {@render strip(bar1b, 20)}
      </div>
      <div class="bar second">{@render strip(bar2, 20)}</div>

      <div class="body">
        <div class="dock">
          {#each dock as it, n}
            <span class:line={n === 5} style="margin-top:{it.gap}px">{@render icon(it.k, 19)}</span>
          {/each}
        </div>
        <div class="panels">
          <div class="head">Layer<svg viewBox="0 0 22 8" width="22" height="8"><path d="M.7 3.500h4v3.500h-4zM2.500 3V1h4v4H5M15 1l6 6M21 1l-6 6" fill="none" stroke="#111" stroke-width="1.400" /></svg></div>
          <div class="tools">{@render strip(layerTools, 14)}</div>
          <div class="layers">
            <div class="layer"><svg viewBox="0 0 12 12" width="12" height="12"><path d="M.5.5h11v11H.5z" fill="#fff" stroke="#333" /><path d="M2.500 6l2.500 2.500 4.500-5" fill="none" stroke="#333" /></svg><i></i><b>circoscrizioni_pa</b></div>
          </div>
          <div class="head lower">Browser<svg viewBox="0 0 22 8" width="22" height="8"><path d="M.7 3.500h4v3.500h-4zM2.500 3V1h4v4H5M15 1l6 6M21 1l-6 6" fill="none" stroke="#111" stroke-width="1.400" /></svg></div>
          <div class="tools tall">{@render strip(browserTools, 14)}</div>
          <div class="tree">
            {#each tree as [t, k, open]}
              <div><svg class="arrow" class:hide={!open} viewBox="0 0 6 10" width="6" height="10"><path d="M1 1l4 4-4 4" fill="none" stroke="#aaa" stroke-width="1.400" /></svg>{@render icon(k, 16)}<span>{t}</span></div>
            {/each}
          </div>
        </div>
        <div class="canvas">
          <svg class="map" viewBox="567 260 1283 722" width="1283" height="722">
            <text class="mark" transform="translate(1150 578) rotate(-21)" textLength="138">finito</text>
            <g transform="translate(730 290) scale(.33333)">
              <polygon points={outline} fill="#da5988" stroke="#5e2a48" stroke-width="3.600" stroke-linejoin="round" />
              <path d="M1172 1072l8-12 12 48-3 18-7-2z" fill="#da5988" stroke="#5e2a48" stroke-width="2.500" />
              <g fill="none" stroke="#5e2045" stroke-width="3.800">{#each lines as l}<polyline points={l} />{/each}</g>
              <g fill="none" stroke="#3a3a36" stroke-width="5">{@html piers}</g>
            </g>
            <path d="M1043 239Q1072 302 1165 321T1334 342" fill="none" stroke="#de4044" stroke-width="1.500" />
            <path d="M1333 337l14 5.500-14 4z" fill="#e3262b" />
            <circle cx="1043" cy="237.500" r="4.800" fill="#e3242b" />
          </svg>
          <div class="popup">
            <header><span>circoscrizioni_pa :: Totale degli elementi: 8, Filtrati: 8, Selezionati: 0</span><i></i></header>
            <div class="ptools">{@render strip(tableTools, 18)}</div>
            <div class="grid">
              <div class="row th"><span></span><span><svg viewBox="0 0 8 4" width="6" height="3"><path d="M0 4l4-4 4 4" fill="none" stroke="#888" /></svg>fid</span><span>CIR_ID</span></div>
              {#each rows as c, n}
                <div class="row" class:alt={n % 2}><span>{n + 1}</span><span>{n + 1}</span><span>{c}</span></div>
              {/each}
              <div class="rest"></div>
            </div>
            <footer><span class="all"><svg viewBox="0 0 20 20" width="15" height="15">{@html icons.funnely}</svg>Mostra tutti gli elementi<svg class="tick" viewBox="0 0 8 5" width="6" height="4"><path d="M0 0h8L4 5z" /></svg></span>
              <span class="modes"><svg viewBox="0 0 20 18" width="18" height="17"><path d="M.5.5h19v17H.5z" fill="#dfe9f2" stroke="#a9b9c8" /><path d="M3 4h6v10H3zM11 5h6M11 9h6M11 13h6" fill="none" stroke="#7f9ab5" /></svg><svg viewBox="0 0 20 18" width="20" height="18"><path d="M.5.5h19v17H.5z" fill="#cfe4f7" stroke="#3f8ad0" /><path d="M3 4h14v11H3zM3 5h14M3 8h14M3 11h14M8 5v10" fill="none" stroke="#5784b8" /></svg></span>
            </footer>
          </div>
        </div>
      </div>

      <div class="status">
        <span class="locate"><svg viewBox="0 0 12 12" width="10" height="10"><circle cx="5" cy="5" r="4" fill="none" stroke="#999" /><path d="M8 8l3.500 3.500" stroke="#999" /></svg>Digita per localizzare (Ctrl+K)</span>
        <span class="ready">Pronto</span>
        <span class="coord">Coordinata</span><span class="field f1">2369695,4215989</span>
        <svg viewBox="0 0 16 16" width="14" height="16"><path d="M2 3l10 10M5 1l9 9M3 9l5 5" fill="none" stroke="#333" stroke-width="1.600" /><path d="M6 1q6 2 2 7t5 7M13 2q-9 2-10 10" fill="none" stroke="#333" stroke-width="1.800" /></svg>
        <span class="scala">Scala</span><span class="field f2">1:108.035<svg viewBox="0 0 8 5" width="7" height="5"><path d="M0 0l4 4 4-4" fill="none" stroke="#777" /></svg></span>
        <svg class="lk" viewBox="0 0 12 16" width="12" height="15"><path d="M0 7h12v8H0z" fill="#555" /><path d="M2.500 7V4q3.500-5 7 0v3" fill="none" stroke="#777" stroke-width="1.600" /></svg>
        <span class="lens">Lente d'ingrandimento</span><span class="field f3">100%<svg class="spin" viewBox="0 0 12 17" width="12" height="17"><path d="M0 0h12v17H0z" fill="#e6e6e6" stroke="#aaa" /><path d="M2.500 7L6 3l3.500 4zM2.500 10.500L6 14.500l3.500-4z" fill="#111" /></svg></span>
        <span class="rota">Rotazione</span><span class="field f4">0,0 °<svg class="spin" viewBox="0 0 12 17" width="12" height="17"><path d="M0 0h12v17H0z" fill="#e6e6e6" stroke="#aaa" /><path d="M2.500 7L6 3l3.500 4zM2.500 10.500L6 14.500l3.500-4z" fill="#111" /></svg></span>
        <svg class="cb" viewBox="0 0 12 12" width="12" height="12"><path d="M.5.5h11v11H.5z" fill="#fff" stroke="#333" /><path d="M2.500 6l2.500 2.500 4.500-5" fill="none" stroke="#333" /></svg>
        <span class="vis">Visualizza</span>
        <svg class="gb" viewBox="0 0 16 16" width="14" height="14"><circle cx="8" cy="8" r="6.500" fill="#aaa" stroke="#666" /><path d="M1 6h14M1 10h14M8 1v14M5 2v12M11 2v12" stroke="#666" /></svg>
        <span class="epsg">EPSG:3004</span>
        <svg class="bb" viewBox="0 0 16 16" width="15" height="15"><circle cx="8" cy="7" r="7" fill="#4d4d4d" /><path d="M8 12l5 0-1 4z" fill="#4d4d4d" /><path d="M3.500 7h2M7 7h2M10.500 7h2" stroke="#fff" stroke-width="2" /></svg>
        <svg class="rr" viewBox="0 0 18 16" width="18" height="16"><path d="M1 2h5v5l3-1V2h3l1 3 4-3v5l-4 4v4H4v-4l-3-2z" fill="#d5d5d5" stroke="#777" stroke-width="1.300" /><path d="M3 4l6 7M12 6l3-3" stroke="#777" /></svg>
      </div>
    </section>

    <p class="foot">selezionare il layer (presente nel&nbsp;<em>Layer Panel</em>), tasto destro mouse “Apri tabella attributi” oppure cliccare sull’icona<span class="key"><svg viewBox="0 0 20 20" width="20" height="20"><path d="M1 1h18v18H1z" fill="#eef5fb" stroke="#2f6094" stroke-width="1.500" /><path d="M2 3.500h16" stroke="#2f6094" stroke-width="3" /><path d="M3.500 7.500h3M3.500 10.500h3M3.500 13.500h3M3.500 16.500h3M8.500 7.500h8M8.500 10.500h8M8.500 13.500h8M8.500 16.500h8" stroke="#2d4f72" stroke-width="1.300" /></svg></span>oppure tasto funzione F6</p>
  </main>

  <div class="social">
    {#each socials as d}<a><svg viewBox="0 0 24 24" width="24" height="24"><path {d} fill="#fff" fill-rule="evenodd" /></svg></a>{/each}
  </div>
</div>

<style>
  :global(body) { background: #fcfcfc; overflow: hidden; }
  * { box-sizing: border-box; }
  svg { display: block; flex: none; }
  p, h1 { margin: 0; }
  .page { position: relative; display: flex; width: 1903px; height: 1079px; font-family: Lato, sans-serif; color: #404040; overflow: hidden; }

  aside { width: 300px; flex: none; display: flex; flex-direction: column; background: #fff; }
  .logo { margin: 14px 0 0 28px; overflow: visible; }
  .hfc { font: 700 54px "DejaVu Sans", sans-serif; fill: #000; }
  .tag { font: 700 8.500px "DejaVu Sans", sans-serif; fill: #000; }
  .by { font: 7.500px "DejaVu Sans Mono", monospace; fill: #555; }
  .search { margin: 12px 13px 0; height: 31px; border: 1px solid #4e8a3a; border-radius: 16px; display: flex; align-items: center; padding: 0 0 2px 10px; gap: 4px; font-size: 13px; color: #777; background: #fff; }
  nav { margin-top: 26px; display: flex; flex-direction: column; }
  nav a { font-size: 14.400px; line-height: 18px; }
  .top { padding: 5.820px 0 5.820px 23.300px; font-weight: 700; color: #344c38; }
  .open { position: relative; background: #c2e33d; color: #fff; text-decoration: underline; }
  .minus { position: absolute; left: 9px; top: 9px; }
  .sub { padding: 5.820px 35px; background: #e3e4e4; color: #404040; }
  .sub.current { background: #cfe285; color: #fff; font-weight: 700; text-decoration: underline; }
  aside footer { margin-top: auto; height: 48px; background: #24502a; color: #fff; display: flex; align-items: center; justify-content: center; gap: 3px; font: 700 14.400px "Liberation Serif", serif; padding-top: 6px; }
  aside footer i { border: 4px solid transparent; border-top-color: #fff; margin-top: 4px; }

  main { position: relative; width: 1603px; background: #f5f5f5; padding: 0 52px; display: flex; flex-direction: column; }
  main > :not(.bg) { position: relative; }
  .bg { position: absolute; left: 0; top: 0; }
  .crumbs { height: 68px; border-bottom: 1px solid #78a84c; display: flex; justify-content: space-between; padding: 28px 5px 0 0; line-height: 24px; font-size: 16px; }
  .crumbs a { color: #5b9a3a; }
  .crumbs b { font-weight: 400; margin: 0 4px 0 9px; }
  .crumbs .edit { display: flex; align-items: center; height: 24px; gap: 4px; font: 700 16px "Liberation Serif", serif; }
  h1 { margin-top: 12px; height: 30px; line-height: 30px; font: 700 24px/30px "DejaVu Serif Condensed", "DejaVu Serif", serif; color: #2f4a2f; }
  h1 span { display: inline-block; white-space: nowrap; transform: scaleX(.884); transform-origin: 0 50%; }
  .lead { margin-top: 4px; line-height: 24px; font-size: 16px; }

  .shot { margin-top: 26px; width: 1499px; height: 845px; border: 1px solid #5b9140; border-bottom: 2px solid #5b8a45; border-radius: 6px; background: #f0f0f0; box-shadow: 0 1px 4px #0007; display: flex; flex-direction: column; font-size: 11px; color: #222; overflow: hidden; }
  .title { height: 23px; flex: none; background: #fff; display: flex; align-items: center; padding-left: 3px; gap: 4px; font-size: 12px; }
  .wins { margin: 0 19px 0 auto; }
  .menu { height: 20px; flex: none; background: #fff; display: flex; align-items: center; padding-left: 7.500px; line-height: 18px; font-size: 10.800px; letter-spacing: .1px; }
  .menu span { flex: none; white-space: nowrap; }
  .menu .hot { background: linear-gradient(90deg, #e5f1f8 47px, #fff 47px); box-shadow: -6px 0 #e5f1f8; }
  .bar { height: 25px; flex: none; display: flex; align-items: center; background: #f1f1f1; border-bottom: 1px solid #c4c4c4; }
  .second { height: 27px; border-bottom-color: #8a8a8a; border-top: 1px solid #fff; }
  .slot { flex: none; display: flex; justify-content: center; }
  .ic { overflow: visible; }
  .num { margin-left: 2px; width: 74px; flex: none; height: 18px; background: #f6f6f6; border: 1px solid #ddd; display: flex; align-items: center; justify-content: space-between; padding: 0 1px 0 3px; color: #888; }
  .unit { margin-left: 1px; width: 48px; flex: none; height: 19px; background: #cdcdcd; display: flex; align-items: center; justify-content: space-between; padding: 0 4px; color: #888; }

  .body { height: 723px; flex: none; display: flex; }
  .dock { width: 27px; display: flex; flex-direction: column; align-items: center; padding-left: 2px; border-right: 1px solid #ddd; }
  .line { box-shadow: 0 -14px 0 #f0f0f0, 0 -15px 0 #bbb; }
  .panels { width: 182px; display: flex; flex-direction: column; padding: 1px 0 0 1px; }
  .head { height: 19px; flex: none; background: #dadada; border: 1px solid #c6c6c6; display: flex; align-items: center; justify-content: space-between; padding: 0 3px; font-size: 11.300px; }
  .tools { height: 21px; flex: none; display: flex; align-items: center; }
  .tall { height: 23px; }
  .layers { height: 262px; flex: none; background: #fff; border: 1px solid #888; padding-left: 21px; }
  .layer { height: 17px; background: #dcdcdc; display: flex; align-items: center; padding-left: 1px; font-size: 11px; margin-right: 1px; }
  .layer i { width: 14px; height: 15px; background: #a46cb4; margin: 0 5px; }
  .layer b { text-decoration: underline; letter-spacing: -.1px; }
  .lower { margin-top: 5px; }
  .tree { flex: 1; background: #fff; border: 1px solid #888; }
  .tree div { height: 18.700px; display: flex; align-items: center; padding: 0 0 2px 7px; }
  .arrow { margin-right: 9px; }
  .hide { visibility: hidden; }
  .tree span { margin-left: 4px; }
  .canvas { position: relative; margin-left: 4px; width: 1284px; background: #fff; border: solid #9a9a9a; border-width: 0 1px 1px; }
  .map { overflow: visible; }
  .mark { font: italic 700 46px "Liberation Serif", serif; fill: #fff; stroke: #f4f4f4; stroke-width: 1px; }

  .popup { position: absolute; left: 787px; top: 62px; width: 455px; height: 362px; background: #fff; box-shadow: 0 0 6px #0006; display: flex; flex-direction: column; }
  .popup header { height: 29px; display: flex; justify-content: space-between; align-items: center; padding: 0 1px 0 8px; color: #a2a2a2; font-size: 11.600px; letter-spacing: .05px; }
  .popup header span { padding-top: 3px; white-space: nowrap; }
  .popup header i { width: 20px; height: 18px; background: #dcdcdc; margin-top: 3px; }
  .ptools { height: 22px; flex: none; background: #f2f2f2; border-bottom: 1px solid #888; display: flex; align-items: center; }
  .grid { height: 288px; flex: none; border-left: 1px solid #aaa; border-right: 1px solid #ccc; border-bottom: 1px solid #888; display: flex; flex-direction: column; font-size: 10.500px; }
  .row { display: grid; grid-template-columns: 12.500px 98px 97.500px; height: 28.800px; }
  .row span { border-bottom: 1px solid #d6d6d6; border-right: 1px solid #cfcfcf; display: flex; align-items: center; justify-content: flex-end; padding-right: 2px; }
  .row span:first-child { border-bottom-color: transparent; border-right-color: #e3e3e3; }
  .alt span + span { background: #f4f4f4; }
  .row.th { height: 22px; }
  .row.th span { border-bottom: 0; flex-direction: column; justify-content: flex-start; padding-top: 2px; line-height: 13px; }
  .row.th span:last-child { padding-top: 4px; }
  .rest { flex: 1; width: 12.500px; background: #efefef; }
  .popup footer { flex: 1; background: #f2f2f2; display: flex; justify-content: space-between; align-items: center; padding: 0 2px 2px 3px; }
  .all { width: 144px; height: 19px; background: #e1e1e1; border: 1px solid #aaa; display: flex; align-items: center; gap: 3px; padding-left: 4px; white-space: nowrap; font-size: 10.800px; }
  .tick { margin: 9px 0 0 -7px; }
  .modes { display: flex; gap: 4px; }

  .status { flex: 1; border-bottom: 2px solid #23351f; display: flex; align-items: center; padding-left: 3px; font-size: 10.800px; white-space: nowrap; }
  .status > * { flex: none; }
  .locate { width: 215px; height: 18px; background: #fff; border: 1px solid #999; display: flex; align-items: center; gap: 6px; padding-left: 6px; color: #888; letter-spacing: .1px; }
  .ready { margin-left: 6px; width: 456px; }
  .coord { width: 55px; }
  .field { height: 18px; background: #fff; border: 1px solid #888; display: flex; align-items: center; justify-content: space-between; padding-left: 2px; }
  .f1 { width: 87px; margin-right: 3px; font-size: 10.200px; letter-spacing: -.25px; }
  .scala { margin-left: 11px; width: 27px; }
  .f2 { width: 76px; padding-right: 3px; font-size: 10.200px; }
  .lk { margin-left: 4px; }
  .lens { margin-left: 12px; width: 112px; }
  .f3 { width: 68px; font-size: 10.200px; }
  .rota { margin-left: 7px; width: 56px; }
  .f4 { width: 65px; font-size: 10.200px; }
  .cb { margin-left: 4px; }
  .vis { margin-left: 5px; width: 61px; }
  .epsg { margin-left: 3px; width: 62px; font-size: 10.400px; letter-spacing: -.1px; }
  .rr { margin-left: 10px; }

  .foot { margin-top: 19px; height: 32px; display: flex; align-items: center; font-size: 16px; letter-spacing: .01px; white-space: nowrap; }
  .key { margin: 4px 4px 0 5px; width: 28px; height: 29px; flex: none; border: 1px solid #5b9140; border-radius: 6px; background: #fff; box-shadow: 0 1px 4px #0006; display: flex; align-items: center; justify-content: center; }

  .social { position: absolute; left: 1855px; top: 216px; width: 48px; background: #56972f; }
  .social a { height: 48px; display: flex; align-items: center; justify-content: center; }
</style>
